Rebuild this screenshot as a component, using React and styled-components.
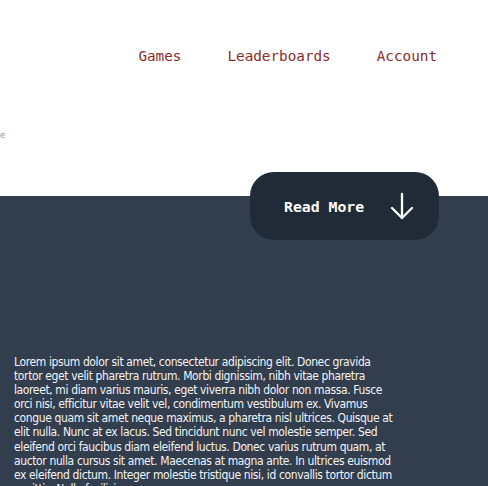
import styled, { createGlobalStyle } from "styled-components";

const GlobalStyle = createGlobalStyle`
  html, body {
    margin: 0;
    padding: 0;
    background: #323e4e;
  }
`;

const Page = styled.div`
  width: 488px;
  height: 486px;
  overflow: hidden;
  background: #323e4e;
`;

const Header = styled.header`
  height: 196px;
  background: #ffffff;
  box-sizing: border-box;
  padding: 46px 51px 0 0;
  display: flex;
  flex-direction: column;
`;

const Nav = styled.nav`
  display: flex;
  justify-content: flex-end;
  align-items: baseline;
  gap: 46px;
`;

const NavLink = styled.a`
  font-family: "DejaVu Sans Mono", "Liberation Mono", monospace;
  font-size: 14.3px;
  color: #8a2b2b;
  text-decoration: none;
  cursor: pointer;
  margin-top: ${(p) => p.$drop || 0}px;
`;

const Tagline = styled.span`
  margin-top: 66px;
  font-family: "Noto Sans", sans-serif;
  font-size: 9px;
  line-height: 10px;
  color: #9a9ca8;
`;

const Hero = styled.section`
  display: flex;
  flex-direction: column;
  padding: 0 14px;
`;

const ReadMore = styled.button`
  position: relative;
  z-index: 1;
  align-self: flex-end;
  margin: -24px 35px 0 0;
  width: 189px;
  height: 68px;
  display: flex;
  align-items: center;
  justify-content: space-between;
  padding: 0 25px 0 34px;
  box-sizing: border-box;
  border: none;
  border-radius: 24px;
  background: #212b37;
  color: #ffffff;
  font-family: "DejaVu Sans Mono", "Liberation Mono", monospace;
  font-size: 14.8px;
  font-weight: 700;
  cursor: pointer;
`;

const Body = styled.p`
  margin: 115px 0 0 0;
  width: 386px;
  font-family: "DejaVu Sans Condensed", "Noto Sans", sans-serif;
  font-size: 12px;
  letter-spacing: -0.38px;
  line-height: 14.1px;
  color: #f2f3f5;
`;

const DownArrow = () => (
  <svg width="24" height="28" viewBox="0 0 24 28" fill="none" stroke="#ffffff" strokeWidth="2.3" strokeLinecap="round" strokeLinejoin="round">
    <path d="M12 2v24" />
    <path d="M2 16l10 10 10-10" />
  </svg>
);

export default function App() {
  return (
    <Page>
      <GlobalStyle />
      <Header>
        <Nav>
          <NavLink>Games</NavLink>
          <NavLink>Leaderboards</NavLink>
          <NavLink $drop={2}>Account</NavLink>
        </Nav>
        <Tagline>e</Tagline>
      </Header>
      <Hero>
        <ReadMore>
          Read More
          <DownArrow />
        </ReadMore>
        <Body>
          Lorem ipsum dolor sit amet, consectetur adipiscing elit. Donec gravida tortor eget velit pharetra rutrum. Morbi dignissim, nibh vitae pharetra laoreet, mi diam varius mauris, eget viverra nibh dolor non massa. Fusce orci nisi, efficitur vitae velit vel, condimentum vestibulum ex. Vivamus congue quam sit amet neque maximus, a pharetra nisl ultrices. Quisque at elit nulla. Nunc at ex lacus. Sed tincidunt nunc vel molestie semper. Sed eleifend orci faucibus diam eleifend luctus. Donec varius rutrum quam, at auctor nulla cursus sit amet. Maecenas at magna ante. In ultrices euismod ex eleifend dictum. Integer molestie tristique nisi, id convallis tortor dictum sagittis. Nulla facilisi.
        </Body>
      </Hero>
    </Page>
  );
}
